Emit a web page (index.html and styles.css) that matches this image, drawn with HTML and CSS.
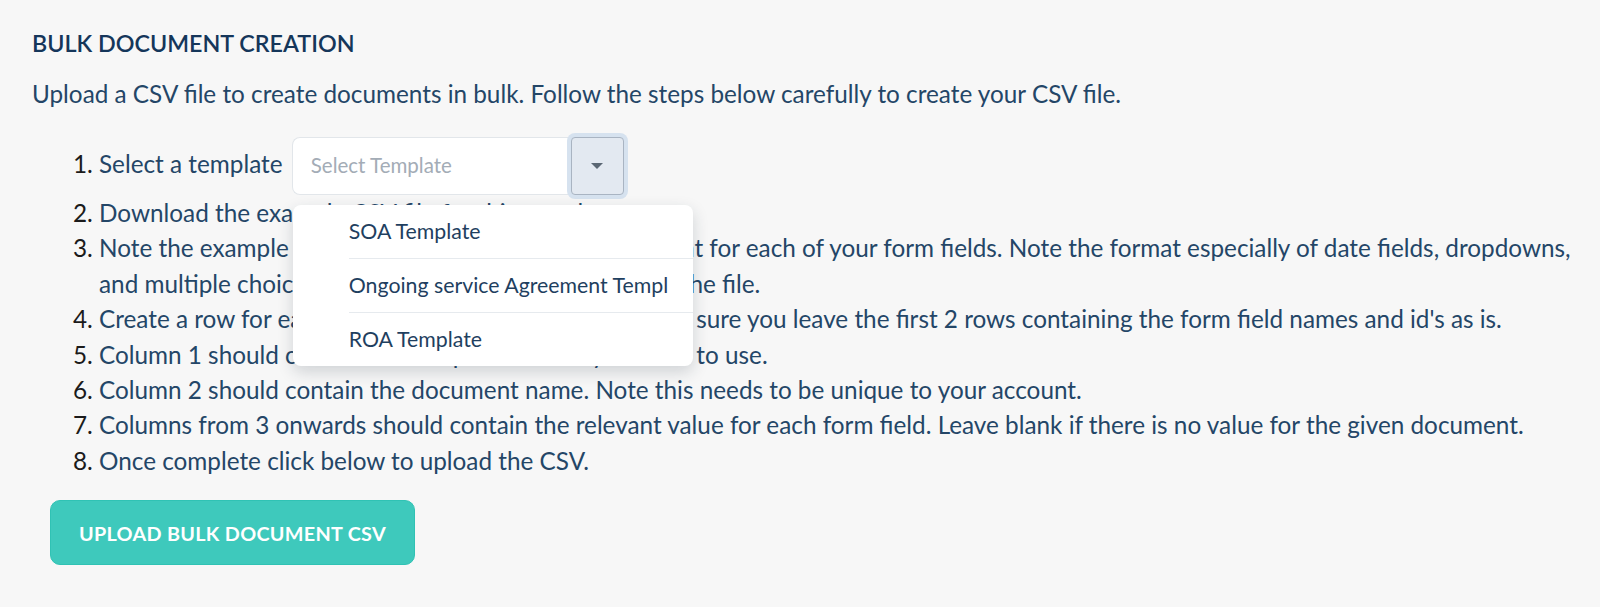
FILE: index.html
```html
<!DOCTYPE html>
<html lang="en">
<head>
    <meta charset="UTF-8">
    <meta name="viewport" content="width=device-width, initial-scale=1.0">
    <title>Bulk Document Creation</title>
    <link rel="stylesheet" href="styles.css">
</head>
<body>
    <div class="page">
        <h2 class="title">BULK DOCUMENT CREATION</h2>
        <p class="intro">Upload a CSV file to create documents in bulk. Follow the steps below carefully to create your CSV file.</p>
        <ol class="steps">
            <li class="step-select">
                Select a template
                <div class="select">
                    <div class="select-input">Select Template</div>
                    <div class="select-toggle"><span class="caret"></span></div>
                    <ul class="select-menu">
                        <li>SOA Template</li>
                        <li>Ongoing service Agreement Templ</li>
                        <li>ROA Template</li>
                    </ul>
                </div>
            </li>
            <li>Download the example CSV file for this template.</li>
            <li>Note the example rows in the CSV file to spot the format for each of your form fields. Note the format especially of date fields, dropdowns, and multiple choice fields. Those are each explained in the file.</li>
            <li>Create a row for each document you want to add. Make sure you leave the first 2 rows containing the form field names and id's as is.</li>
            <li>Column 1 should contain the template ID that you want to use.</li>
            <li>Column 2 should contain the document name. Note this needs to be unique to your account.</li>
            <li>Columns from 3 onwards should contain the relevant value for each form field. Leave blank if there is no value for the given document.</li>
            <li>Once complete click below to upload the CSV.</li>
        </ol>
        <button class="upload-btn">UPLOAD BULK DOCUMENT CSV</button>
    </div>
</body>
</html>
```

FILE: styles.css
```css
body {
    margin: 0;
    padding: 0;
    background-color: #f7f7f7;
    font-family: Lato, "Noto Sans", sans-serif;
    color: #244667;
}
.page {
    padding: 28px 16px 20px 32px;
}
.title {
    margin: 0;
    font-size: 23.3px;
    font-weight: 600;
    line-height: 30px;
    color: #15365a;
}
.intro {
    margin: 18px 0 0 0;
    font-size: 24.3px;
    line-height: 36px;
}
.steps {
    margin: 25px 0 0 0;
    padding-left: 67px;
    font-size: 24.3px;
    line-height: 35.4px;
}
.steps li::marker {
    color: #1b1b1b;
}
.select {
    position: relative;
    display: inline-flex;
    margin-left: 3px;
    height: 58px;
}
.select-input {
    width: 260px;
    padding-left: 18px;
    display: flex;
    align-items: center;
    background-color: white;
    border: 1px solid #e2e6ea;
    border-right: none;
    border-radius: 8px 0 0 8px;
    font-size: 20.5px;
    color: #a3acb6;
}
.select-toggle {
    width: 51px;
    display: flex;
    align-items: center;
    justify-content: center;
    background-color: #e3e9f1;
    border: 1px solid #a9b4c2;
    border-radius: 4px;
    box-shadow: 0 0 0 4px #d6e2ef;
}
.caret {
    width: 0;
    height: 0;
    border-left: 6px solid transparent;
    border-right: 6px solid transparent;
    border-top: 6px solid #5b6774;
}
.select-menu {
    position: absolute;
    top: 68px;
    left: 1px;
    width: 400px;
    margin: 0;
    padding: 0;
    list-style: none;
    background-color: white;
    border-radius: 8px;
    box-shadow: 0 6px 16px rgba(30, 45, 60, 0.18);
    overflow: hidden;
    z-index: 5;
}
.select-menu li {
    margin-left: 56px;
    padding-right: 20px;
    height: 53px;
    line-height: 53px;
    font-size: 21.3px;
    color: #1f3f5f;
    white-space: nowrap;
    overflow: hidden;
    border-bottom: 1px solid #e6eaee;
}
.select-menu li:last-child {
    border-bottom: none;
}
.upload-btn {
    display: block;
    margin: 22px 0 0 18px;
    width: 365px;
    height: 65px;
    background-color: #3ec9bc;
    border: 1px solid #30c2b4;
    border-radius: 10px;
    color: white;
    font-family: Lato, "Noto Sans", sans-serif;
    font-size: 19.8px;
    font-weight: 700;
    letter-spacing: 0.3px;
}
```
